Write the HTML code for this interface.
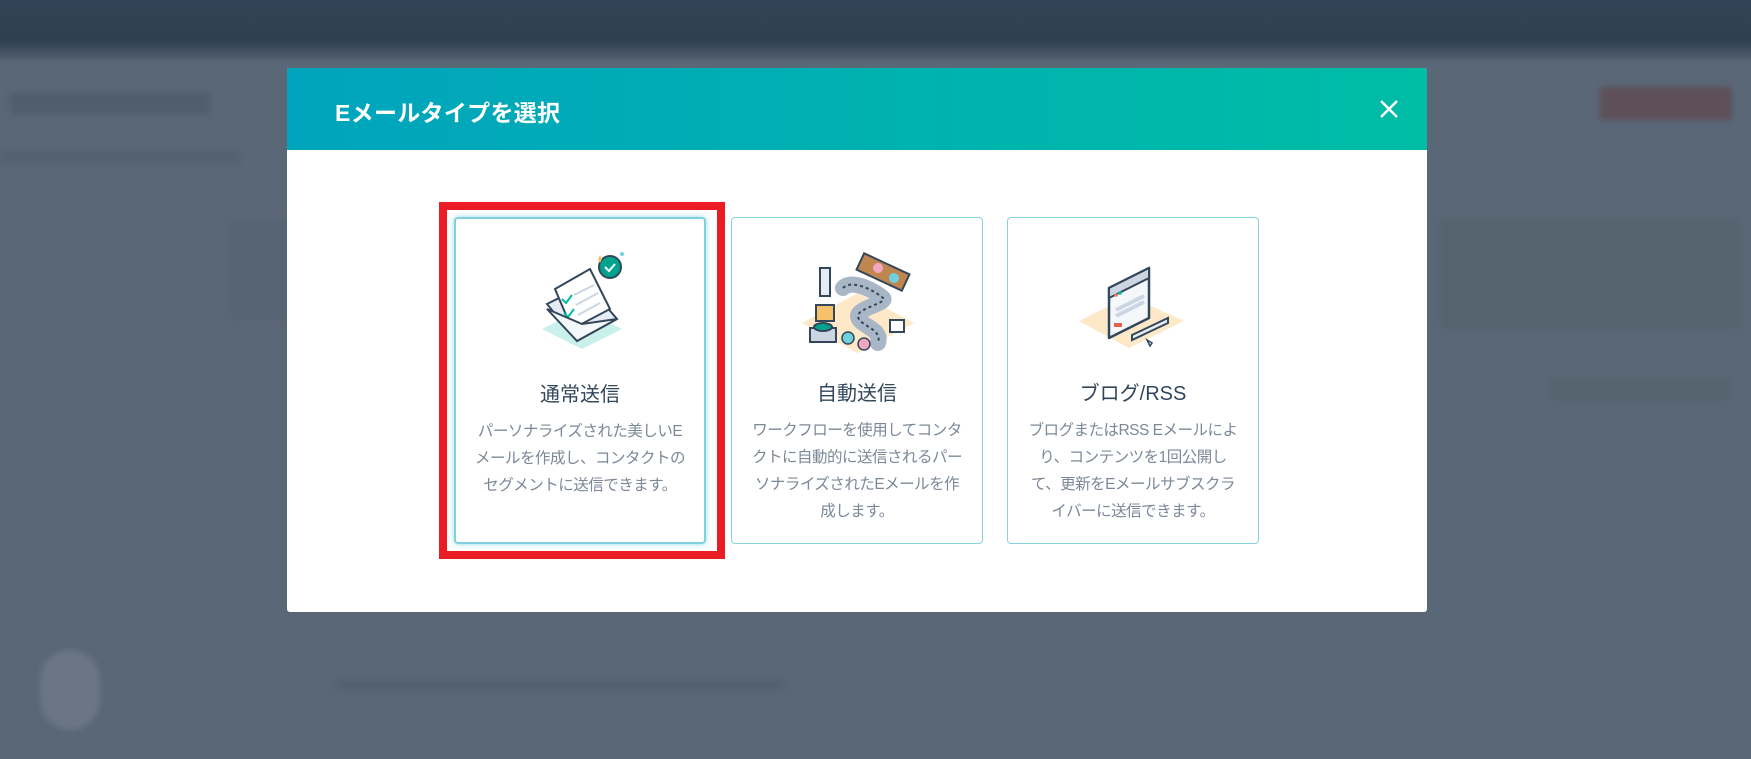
<!DOCTYPE html>
<html><head><meta charset="utf-8"><style>
*{margin:0;padding:0;box-sizing:border-box}
body{width:1751px;height:759px;overflow:hidden;background:#5a6777;font-family:"Liberation Sans","Noto Sans CJK JP",sans-serif;position:relative}
.top{position:absolute;left:0;top:0;width:1751px;height:62px;background:linear-gradient(#324356 0,#2f4052 40px,#4a5869 56px,#5a6777 62px)}
.blob{position:absolute;background:#4f5d6d;filter:blur(3px);border-radius:3px}
.modal{position:absolute;left:287px;top:68px;width:1140px;height:544px;background:#fff;border-radius:3px;overflow:hidden}
.hdr{height:82px;background:linear-gradient(90deg,#00a4bd,#00bda5);position:relative}
.hdr h1{position:absolute;left:48px;top:26px;color:#fff;font-size:23px;font-weight:bold;letter-spacing:0.3px}
.close{position:absolute;left:1092px;top:31px}
.red{position:absolute;left:439px;top:202px;width:286px;height:357px;border:8px solid #ec1c24;background:#fff}
.card{position:absolute;top:217px;width:252px;height:327px;border:1px solid #86d3df;border-radius:4px;background:#fff;text-align:center}
.card.sel{border:2px solid #7fd1de;box-shadow:0 0 6px rgba(127,209,222,.8)}
.card .t{position:absolute;left:0;right:0;top:159px;font-size:20px;color:#33475b}
.card .d{position:absolute;left:0;right:0;top:199px;font-size:15.5px;line-height:27px;color:#7c8898;letter-spacing:-0.5px;white-space:nowrap}
.card svg{position:absolute;left:66px;top:30px}
</style></head><body>
<div class="top"></div>
<div class="blob" style="left:10px;top:92px;width:200px;height:22px"></div>
<div class="blob" style="left:0;top:150px;width:240px;height:14px;opacity:.6"></div>
<div class="blob" style="left:230px;top:220px;width:60px;height:100px;background:#566474"></div>
<div class="blob" style="left:1600px;top:87px;width:132px;height:33px;background:#5e5058"></div>
<div class="blob" style="left:1440px;top:218px;width:300px;height:110px;background:#55636f"></div>
<div class="blob" style="left:1550px;top:378px;width:180px;height:22px;background:#55636f"></div>
<div class="blob" style="left:335px;top:680px;width:450px;height:10px;background:#526170"></div>
<div class="blob" style="left:40px;top:650px;width:60px;height:80px;border-radius:30px;background:#6a7684"></div>
<div class="modal">
<div class="hdr"><h1>Eメールタイプを選択</h1>
<svg class="close" width="20" height="20" viewBox="0 0 20 20"><path d="M2 2L18 18M18 2L2 18" stroke="#fff" stroke-width="2.4"/></svg></div>
</div>
<div class="red"></div>
<div class="card sel" style="left:454px">
<svg width="120" height="115" viewBox="0 0 120 115">
<path d="M20 80L60 60L100 80L60 100Z" fill="#c9f0ea"/>
<path d="M25 55L65 35L95 70L55 92Z" fill="#e6ecf3" stroke="#33475b" stroke-width="2"/>
<path d="M33 40L68 20L88 60L50 80Z" fill="#fff" stroke="#33475b" stroke-width="2"/>
<path d="M40 50l4 4 6-8M42 64l4 4 6-8" stroke="#00bda5" stroke-width="2" fill="none"/>
<path d="M52 46L72 36M54 56L76 44M56 66L78 54" stroke="#cbd6e2" stroke-width="2"/>
<path d="M25 60L55 92L95 70L60 75Z" fill="#f5f8fa" stroke="#33475b" stroke-width="2"/>
<circle cx="88" cy="18" r="11" fill="#00a38d" stroke="#33475b" stroke-width="2"/>
<path d="M83 18l4 4 6-7" stroke="#fff" stroke-width="2" fill="none"/>
<path d="M76 10l2-4 2 4-2 4z" fill="#f5c26b"/><circle cx="100" cy="5" r="2" fill="#6fd0e0"/>
</svg>
<div class="t">通常送信</div>
<div class="d">パーソナライズされた美しいE<br>メールを作成し、コンタクトの<br>セグメントに送信できます。</div>
</div>
<div class="card" style="left:731px">
<svg width="120" height="115" viewBox="0 0 120 115">
<path d="M4 75L60 45L116 75L60 105Z" fill="#fde8c8"/>
<rect x="60" y="15" width="50" height="18" transform="rotate(25 85 24)" fill="#c08650" stroke="#33475b" stroke-width="2"/>
<circle cx="80" cy="20" r="5" fill="#f2a7c0"/><circle cx="96" cy="30" r="5" fill="#6fd0e0"/>
<path d="M45 40C55 30 80 45 85 50C90 55 60 60 60 68C60 78 85 80 80 95" stroke="#a8b6c6" stroke-width="16" fill="none" stroke-linecap="round"/>
<path d="M45 40C55 30 80 45 85 50C90 55 60 60 60 68C60 78 85 80 80 95" stroke="#33475b" stroke-width="2" fill="none" stroke-dasharray="3 3"/>
<rect x="22" y="20" width="10" height="28" fill="#e6ecf3" stroke="#33475b" stroke-width="2"/>
<rect x="18" y="57" width="18" height="16" fill="#f5c26b" stroke="#33475b" stroke-width="2"/>
<rect x="12" y="80" width="26" height="14" fill="#cbd6e2" stroke="#33475b" stroke-width="2"/>
<ellipse cx="25" cy="79" rx="9" ry="4" fill="#00a38d" stroke="#33475b" stroke-width="2"/>
<circle cx="50" cy="90" r="6" fill="#6fd0e0" stroke="#33475b" stroke-width="1.5"/>
<circle cx="66" cy="96" r="6" fill="#f2a7c0" stroke="#33475b" stroke-width="1.5"/>
<path d="M92 72h14v12h-14z" fill="#fff" stroke="#33475b" stroke-width="2"/>
</svg>
<div class="t">自動送信</div>
<div class="d">ワークフローを使用してコンタ<br>クトに自動的に送信されるパー<br>ソナライズされたEメールを作<br>成します。</div>
</div>
<div class="card" style="left:1007px">
<svg width="120" height="115" viewBox="0 0 120 115">
<path d="M5 73L55 48L110 73L55 100Z" fill="#fde8c8"/>
<path d="M35 40L75 20L75 70L35 90Z" fill="#f5f8fa" stroke="#33475b" stroke-width="2.5" stroke-linejoin="round"/>
<path d="M35 40L75 20L75 30L35 50Z" fill="#cbd6e2" stroke="#33475b" stroke-width="2"/>
<circle cx="42" cy="47" r="1.8" fill="#f2785c"/><circle cx="46" cy="45" r="1.8" fill="#00bda5"/>
<path d="M42 62L70 48M42 68L70 54" stroke="#cbd6e2" stroke-width="4"/>
<rect x="40" y="75" width="8" height="4" fill="#e8604c"/>
<path d="M58 87L94 70L94 75L58 92Z" fill="#e6ecf3" stroke="#33475b" stroke-width="2"/>
<path d="M73 92l3 6 2-3z" fill="#fff" stroke="#33475b" stroke-width="1.5"/>
</svg>
<div class="t">ブログ/RSS</div>
<div class="d">ブログまたはRSS Eメールによ<br>り、コンテンツを1回公開し<br>て、更新をEメールサブスクラ<br>イバーに送信できます。</div>
</div>
</body></html>
